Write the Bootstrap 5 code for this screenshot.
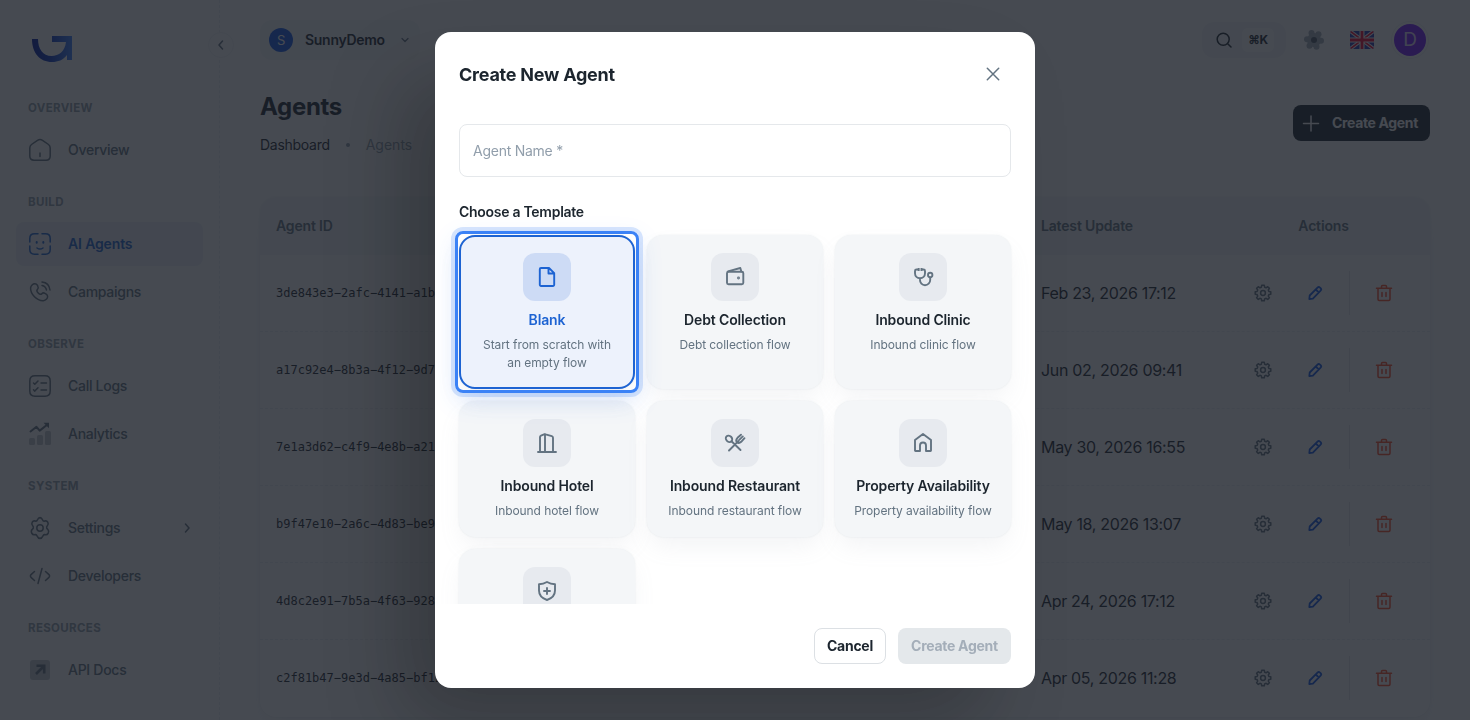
<!DOCTYPE html>
<html lang="en">
<head>
  <meta charset="UTF-8">
  <title>Agents</title>
  <meta name="viewport" content="width=device-width, initial-scale=1">
  <link href="https://cdn.jsdelivr.net/npm/bootstrap@5.3.0/dist/css/bootstrap.min.css" rel="stylesheet">
  <script src="https://cdn.jsdelivr.net/npm/bootstrap@5.3.0/dist/js/bootstrap.bundle.min.js"></script>
  <style>
    body {
      font-family: Inter, "Liberation Sans", sans-serif;
      font-size: 14px;
      line-height: 22px;
      letter-spacing: -0.02em;
      color: #1c252e;
      background: #fff;
      height: 100vh;
      overflow: hidden;
    }
    svg { display: block; flex: none; }
    .ico { fill: none; stroke: currentColor; stroke-width: 1.5; stroke-linecap: round; stroke-linejoin: round; }

    /* sidebar */
    .side { width: 220px; border-right: 1px dashed #eceff2; padding: 0 16px; }
    .side-logo { height: 78px; padding: 36px 0 0 16px; }
    .side-head { height: 50px; padding: 20px 12px 0; font-size: 11.5px; line-height: 20px; font-weight: 700; color: #919eab; letter-spacing: .03em; }
    .side-link { height: 44px; width: 187px; padding: 0 12px; gap: 16px; border-radius: 8px; color: #637381; font-weight: 500; letter-spacing: -0.02em; }
    .side-link + .side-link { margin-top: 4px; }
    .side-link.on { background: #edf1f8; color: #1d63d2; font-weight: 600; letter-spacing: -0.01em; }
    .side-toggle { position: absolute; left: 208px; top: 32px; width: 26px; height: 26px; border: 1px solid #f1f3f5; background: #fff; color: #637381; }

    /* top bar */
    .topbar { height: 80px; }
    .org { height: 40px; width: 160px; border-radius: 12px; background: #f6f7f9; padding: 0 11px 0 9px; font-size: 14px; font-weight: 600; letter-spacing: -0.02em; }
    .org .ico { stroke-width: 1.2; color: #637381; }
    .org-dot { width: 24px; height: 24px; background: #1158e8; color: #fff; font-size: 13px; font-weight: 400; margin-right: 12px; }
    .find { width: 84px; height: 36px; border-radius: 12px; background: #f4f6f8; padding: 0 12px 0 14px; }
    .find-key { width: 32px; height: 24px; border-radius: 6px; background: #fff; font-size: 12px; font-weight: 700; color: #1c252e; }
    .top-gear { margin: 0 26px 0 18px; }
    .top-flag { border-radius: 2px; }
    .who { width: 32px; height: 32px; margin: 0 4px 0 20px; background: #7318ff; color: #e6dcff; font-size: 19px; box-shadow: 0 0 0 2px #fff, 0 0 0 3px #f0f2f4; }

    .page { padding: 0 40px; }
    .page-head { padding-top: 9px; }
    .page-title { font-size: 24px; line-height: 36px; font-weight: 700; letter-spacing: -0.013em; }
    .crumbs { margin-top: 9px; }
    .crumb-dot { width: 4px; height: 4px; background: #919eab; margin: 0 16px; }
    .crumb-now { color: #919eab; letter-spacing: 0; }
    .btn-create { height: 36px; width: 137px; background: #1c252e; color: #fff; border-radius: 8px; font-size: 14px; font-weight: 700; padding: 0 11px 1px 7px; letter-spacing: -0.025em; }

    /* agents table */
    .sheet { margin-top: 41px; border-radius: 16px; box-shadow: 0 0 2px 0 rgba(145,158,171,.2), 0 12px 24px -4px rgba(145,158,171,.12); overflow: hidden; }
    .sheet-head { height: 58px; background: #f4f6f8; color: #637381; font-weight: 600; letter-spacing: -0.012em; }
    .sheet-row { height: 77px; border-bottom: 1px dashed #eceff2; font-size: 16px; letter-spacing: -0.02em; }
    .sheet-row:last-child { border-bottom-color: transparent; }
    .c-id { width: 765px; padding-left: 16px; }
    .c-date { width: 216px; padding-left: 16px; }
    .sheet-row .c-id { font: 12px/18px "DejaVu Sans Mono", monospace; letter-spacing: 0; }
    .c-act { width: 189px; padding-right: 24px; }
    .acts { padding: 0 0 0 12px; }
    .acts .ico { margin-right: 32px; }
    .acts .act-cog { color: #637381; }
    .acts .act-pen { color: #1158e8; margin-right: 24px; stroke-width: 1.8; }
    .acts .act-bin { color: #ff4a24; margin: 0 0 0 24px; }
    .act-line { width: 1px; height: 44px; background: #e3e7eb; }

    /* dialog */
    .modal { background: rgba(24,29,37,.8); --bs-modal-width: 600px; }
    .modal-dialog { margin: 32px auto; }
    .modal-content { height: 656px; border: 0; border-radius: 16px; box-shadow: -40px 40px 80px -8px rgba(0,0,0,.24); color: #1c252e; }
    .dlg-head { height: 84px; padding: 0 32px 0 24px; }
    .dlg-title { font-size: 18px; line-height: 28px; font-weight: 700; letter-spacing: -0.013em; padding-top: 1px; }
    .dlg-close { color: #637381; }
    .dlg-body { height: 488px; padding: 8px 24px 0; overflow: hidden; }
    .name-field { height: 53px; border: 1px solid #e5e8eb; border-radius: 8px; font-size: 14px; padding: 0 13px; color: #1c252e; letter-spacing: -0.018em; }
    .name-field::placeholder { color: #919eab; opacity: 1; }
    .pick-label { margin: 24px 0 12px; font-weight: 600; letter-spacing: -0.02em; }
    .tpl-grid { display: grid; grid-template-columns: repeat(3, 1fr); gap: 12px; }
    .tpl { position: relative; padding: 18px 17px; border-radius: 16px; background: #f4f6f8; text-align: center; box-shadow: 0 0 2px 0 rgba(145,158,171,.2), 0 12px 24px -4px rgba(145,158,171,.12); }
    .tpl-icon { width: 48px; height: 48px; border-radius: 12px; background: #e7eaef; color: #637381; margin: 0 auto 8px; }
    .tpl-icon .ico { stroke-width: 1.9; }
    .tpl-name { font-weight: 600; white-space: nowrap; letter-spacing: -0.01em; margin: 0 -10px; }
    .tpl-note { padding-top: 5px; margin-bottom: -1px; font-size: 12px; line-height: 18px; color: #637381; letter-spacing: -0.006em; }
    .tpl.on { padding: 16px 16px; border: 2px solid #1d63d2; background: #edf2fc; z-index: 1; }
    .tpl.on .tpl-icon { background: #cddbf5; color: #1d63d2; }
    .tpl.on .tpl-name { color: #1d63d2; }
    .tpl.on::after { content: ""; position: absolute; inset: -6px; border: 3px solid #3b82f6; border-radius: 8px; box-shadow: 0 0 0 4px rgba(59,130,246,.2), 0 8px 24px rgba(59,130,246,.15); }
    .dlg-foot { height: 84px; padding: 0 24px; gap: 12px; }
    .dlg-btn { height: 36px; border-radius: 8px; font-size: 14px; font-weight: 700; padding: 0 0 1px; letter-spacing: -0.02em; }
    .dlg-cancel { width: 72px; border: 1px solid #dce0e4; color: #1c252e; }
    .dlg-create, .dlg-create:disabled { width: 113px; border: 0; background: #e4e8eb; color: #a4aeb9; opacity: 1; }
  </style>
</head>
<body>

<svg width="0" height="0" class="position-absolute">
  <symbol id="i-home" viewBox="0 0 24 24"><path d="M1.8 10c0-1.700.5-2.600 1.700-3.500l6-4.200c1.600-1 3.400-1 5 0l6 4.200c1.200.9 1.700 1.800 1.700 3.500v8c0 2.800-1.400 4.200-4.200 4.200H6c-2.800 0-4.200-1.400-4.200-4.200zM12 15v3.500"/></symbol>
  <symbol id="i-face" viewBox="0 0 24 24"><path d="M10 1.800H6.500c-3 0-4.700 1.700-4.700 4.700V10M14 1.800h3.500c3 0 4.700 1.700 4.700 4.700V10M10 22.200H6.500c-3 0-4.700-1.700-4.700-4.700V14M14 22.200h3.500c3 0 4.700-1.700 4.700-4.700V14M9 16c1.800 1.300 4.200 1.300 6 0"/><path stroke-width="2" d="M8.700 10v.8M15.300 10v.8"/></symbol>
  <symbol id="i-call" viewBox="0 0 24 24"><path d="M14 2c4.400.5 7.500 3.500 8 8M14 5.500c2.600.5 4 2 4.500 4.500M9.300 5.100l.6 1.200c.6 1 .4 2.400-.6 3.300 0 0-1.200 1.200.9 3.400s3.400.900 3.400.900c.9-1 2.300-1.200 3.300-.6l1.300.8c1.700 1 1.900 3.400.4 4.900-.9.900-2 1.600-3.200 1.700-2 .1-5.500-.4-8.900-3.900-3.500-3.500-4-6.900-3.900-8.900.1-1.200.8-2.300 1.700-3.200 1.500-1.500 4-1.300 5 .4z"/></symbol>
  <symbol id="i-logs" viewBox="0 0 24 24"><path d="M7 1.800h10c3.500 0 5.200 1.700 5.200 5.200v10c0 3.500-1.700 5.200-5.200 5.200H7c-3.500 0-5.200-1.700-5.200-5.200V7c0-3.500 1.700-5.200 5.200-5.200zM5.500 9l1.300 1.300L10 7M5.500 15.800l1.300 1.300L10 13.800M13 9h5.500M13 16h5.500"/></symbol>
  <symbol id="i-stats" viewBox="0 0 24 24"><g fill="currentColor" stroke="none"><rect x="1" y="16" width="6" height="7" rx="1.500" opacity=".4"/><rect x="9" y="13" width="6" height="10" rx="1.500" opacity=".4"/><rect x="17" y="9" width="6" height="14" rx="1.500" opacity=".4"/><path d="M15.500.8H21V6.300z"/></g><path stroke-width="2" d="M2.500 9.500 8.500 4.800l3.200 3.800L19.500 2.500"/></symbol>
  <symbol id="i-gear" viewBox="0 0 24 24"><path d="M12 1.500c1.700 0 2 .7 2.500 1.900.4 1 1.300 1.400 2.300 1.100 1.300-.4 2.200-.2 3 1.100s.6 2.100-.4 3c-.8.700-1 1.600-.6 2.400l1 1c1 .9 1.300 1.700.4 3.300-.9 1.500-1.700 1.600-3 1.300-1-.3-1.900.2-2.300 1.200-.6 1.300-.9 2.100-2.900 2.100s-2.300-.8-2.900-2.100c-.4-1-1.300-1.500-2.300-1.200-1.300.3-2.100.2-3-1.300s-.6-2.400.4-3.300l1-1c.4-.8.200-1.700-.6-2.400-1-.9-1.200-1.700-.4-3s1.700-1.500 3-1.100c1 .3 1.900-.1 2.300-1.100.5-1.200.8-1.900 2.500-1.900z" transform="translate(0 -.1) scale(1 1.130)"/><circle cx="12" cy="12" r="3.200"/></symbol>
  <symbol id="i-code" viewBox="0 0 24 24"><path d="M6.500 7.500 3.300 10.400c-1.200 1.100-1.200 2.100 0 3.200l3.200 2.900M17.500 7.500l3.200 2.900c1.200 1.100 1.200 2.100 0 3.200l-3.200 2.900M14 4.500l-4 15"/></symbol>
  <symbol id="i-out" viewBox="0 0 24 24"><rect x="2" y="2" width="20" height="20" rx="3" fill="currentColor" stroke="none" opacity=".4"/><path stroke-width="2.600" stroke-linecap="butt" stroke-linejoin="miter" d="M8.500 7.800h7.700v7.700M16 8l-8 8"/></symbol>
  <symbol id="i-cog" viewBox="0 0 20 20"><path d="M8.700 2.300h2.600l.3 1.900 1.500.6 1.600-1.100 1.700 1.700-1.100 1.600.6 1.500 1.900.3v2.500l-1.900.3-.6 1.500 1.100 1.600-1.700 1.700-1.600-1.100-1.500.6-.3 1.900H8.700l-.3-1.900-1.500-.6-1.600 1.100-1.700-1.700 1.100-1.600-.6-1.500-1.900-.3V8.800l1.900-.3.600-1.500-1.100-1.600 1.700-1.700 1.600 1.100 1.500-.6z"/><circle cx="10" cy="10" r="2.400"/></symbol>
  <symbol id="i-pen" viewBox="0 0 20 20"><path d="M4.300 16.200l.4-3.700 7.800-7.900c.8-.8 1.700-.8 2.500 0l.6.6c.8.8.8 1.700 0 2.500L7.900 15.600zM10.800 6.500l2.900 2.900"/></symbol>
  <symbol id="i-bin" viewBox="0 0 20 20"><path d="M2.500 5.300h15M4 5.500v10.800c0 .8.400 1.200 1.200 1.200h9.600c.8 0 1.200-.4 1.200-1.200V5.500M7.500 5V3.500c0-.6.300-1 1-1h3c.7 0 1 .4 1 1V5M8 9.500v4M12 9.500v4"/></symbol>
  <symbol id="i-file" viewBox="0 0 24 24"><path d="M14 3H6a1.200 1.200 0 0 0-1.200 1.200v15.600A1.200 1.200 0 0 0 6 21h12a1.200 1.200 0 0 0 1.200-1.200V8.200zM13.500 3v5.500H19"/></symbol>
  <symbol id="i-wallet" viewBox="0 0 24 24"><rect x="4" y="6.700" width="16.300" height="12.500" rx="1.500"/><path d="M5 6.400 17.300 3l1 3.600"/><circle cx="15.500" cy="13" r=".5" fill="currentColor"/></symbol>
  <symbol id="i-steth" viewBox="0 0 24 24"><path stroke-linecap="butt" d="M8 4.500H5.500C4.500 4.500 4 5 4 6v2.300a5 5 0 0 0 10 0V6c0-1-.5-1.500-1.500-1.500H10.500M9 13.300V15a5 5 0 0 0 5 5.200A5.200 5.200 0 0 0 19.200 15v-3"/><path stroke-linecap="butt" d="M7.700 3v3M10.500 3v3"/><circle cx="19.200" cy="10" r="2.200"/></symbol>
  <symbol id="i-hotel" viewBox="0 0 24 24"><path d="M3 21h18M5 21V6c0-.8.300-1.100 1-1.400L9 3.400c.6-.2 1-.2 1.600 0l6.200 1.800c.9.300 1.200.6 1.200 1.500V21M10 3.300V21"/></symbol>
  <symbol id="i-food" viewBox="0 0 24 24"><path d="M8.500 10.300 17.500 19M6 19.500l9.500-9.500M14 11.300c-1.300-1.600-.8-3.200.5-4.500L18 3.700M21.500 7.200l-3.300 3.600c-1.300 1.200-2.800 1.600-4.200.5M19.800 5.400l-3.600 3.500"/><ellipse cx="6" cy="7.800" rx="2.900" ry="3.500" transform="rotate(-45 6 7.800)"/></symbol>
  <symbol id="i-house" viewBox="0 0 24 24"><path d="M4 9 12 3l8 6v10.500a.5.500 0 0 1-.5.500h-4.500v-5.500a3 3 0 0 0-6 0V20H4.500a.5.500 0 0 1-.5-.5z"/></symbol>
  <symbol id="i-shield" viewBox="0 0 24 24"><path d="M12 3c2.500 1.500 5 2.200 8 2.300v6.200c0 4.600-3 7.800-8 9.500-5-1.700-8-4.900-8-9.500V5.300C7 5.200 9.500 4.500 12 3zM12 9v6M9 12h6"/></symbol>
</svg>

<div class="d-flex vh-100">
  <aside class="side flex-shrink-0">
    <div class="side-logo">
      <svg width="40" height="26" viewBox="0 0 40 26">
        <defs><linearGradient id="lg" x1="0" x2="1"><stop offset="0" stop-color="#0018a0"/><stop offset=".45" stop-color="#0a35c0"/><stop offset="1" stop-color="#3a80ff"/></linearGradient></defs>
        <path fill="url(#lg)" d="M0 3h6c0 10 5 17 13.500 17C27 20 33 15 34 6H20V0h20v24h-5v-5c-4 5-9 7-15 7C8 26 0 17 0 3z"/>
      </svg>
    </div>
    <div class="side-head">OVERVIEW</div>
    <div class="side-link d-flex align-items-center"><svg class="ico" width="24" height="24"><use href="#i-home"/></svg>Overview</div>
    <div class="side-head">BUILD</div>
    <div class="side-link d-flex align-items-center on"><svg class="ico" width="24" height="24"><use href="#i-face"/></svg>AI Agents</div>
    <div class="side-link d-flex align-items-center"><svg class="ico" width="24" height="24"><use href="#i-call"/></svg>Campaigns</div>
    <div class="side-head">OBSERVE</div>
    <div class="side-link d-flex align-items-center"><svg class="ico" width="24" height="24"><use href="#i-logs"/></svg>Call Logs</div>
    <div class="side-link d-flex align-items-center"><svg class="ico" width="24" height="24"><use href="#i-stats"/></svg>Analytics</div>
    <div class="side-head">SYSTEM</div>
    <div class="side-link d-flex align-items-center"><svg class="ico" width="24" height="24"><use href="#i-gear"/></svg>Settings
      <svg class="ico ms-auto" width="8" height="10" viewBox="0 0 8 10"><path d="M2.500 1 6 5 2.500 9"/></svg></div>
    <div class="side-link d-flex align-items-center"><svg class="ico" width="24" height="24"><use href="#i-code"/></svg>Developers</div>
    <div class="side-head">RESOURCES</div>
    <div class="side-link d-flex align-items-center"><svg class="ico" width="24" height="24"><use href="#i-out"/></svg>API Docs</div>
  </aside>
  <div class="side-toggle rounded-circle d-flex align-items-center justify-content-center">
    <svg class="ico" width="8" height="10" viewBox="0 0 8 10"><path d="M5.500 1 2 5l3.500 4"/></svg>
  </div>

  <main class="page flex-grow-1">
    <div class="topbar d-flex align-items-center">
      <div class="org d-flex align-items-center">
        <span class="org-dot rounded-circle d-flex align-items-center justify-content-center">S</span>SunnyDemo
        <svg class="ico ms-auto" width="8" height="6" viewBox="0 0 8 6"><path d="M1 1.500 4 4.500 7 1.500"/></svg>
      </div>
      <div class="find d-flex align-items-center justify-content-between ms-auto">
        <svg class="ico" width="16" height="16" viewBox="0 0 16 16"><circle cx="7.200" cy="7.200" r="6"/><path d="M12 12l3 3"/></svg>
        <span class="find-key d-flex align-items-center justify-content-center">⌘K</span>
      </div>
      <svg class="top-gear" width="20" height="20" viewBox="0 0 20 20"><g fill="#a3adb8"><circle cx="7.500" cy="3" r="3"/><circle cx="14.500" cy="4.200" r="3"/><circle cx="17" cy="10.800" r="3"/><circle cx="12.500" cy="16.700" r="3"/><circle cx="5.500" cy="15.800" r="3"/><circle cx="3" cy="9.200" r="3"/><circle cx="10" cy="10" r="7"/></g><circle cx="10" cy="10" r="3" fill="#4a5866"/></svg>
      <svg class="top-flag" width="24" height="18" viewBox="0 0 24 18">
        <path fill="#1f35b0" d="M0 0h24v18H0z"/>
        <path stroke="#fff" stroke-width="3.600" d="M0 0l24 18M24 0 0 18"/><path stroke="#f0002e" stroke-width="1.600" d="M0 0l24 18M24 0 0 18"/>
        <path stroke="#fff" stroke-width="5" d="M12 0v18M0 9h24"/><path stroke="#f0002e" stroke-width="2.800" d="M12 0v18M0 9h24"/>
      </svg>
      <span class="who rounded-circle d-flex align-items-center justify-content-center">D</span>
    </div>

    <div class="page-head d-flex justify-content-between align-items-start">
      <div>
        <div class="page-title">Agents</div>
        <div class="crumbs d-flex align-items-center"><span>Dashboard</span><span class="crumb-dot rounded-circle"></span><span class="crumb-now">Agents</span></div>
      </div>
      <button class="btn btn-create d-flex align-items-center justify-content-between mt-3">
        <svg class="ico" width="20" height="20" viewBox="0 0 20 20"><path d="M10 3v15M2.500 10.500h15"/></svg>Create Agent
      </button>
    </div>

    <div class="sheet">
      <div class="sheet-head d-flex align-items-center">
        <div class="c-id">Agent ID</div>
        <div class="c-date">Latest Update</div>
        <div class="c-act text-center">Actions</div>
      </div>
      <div id="rows"></div>
    </div>
  </main>
</div>

<div class="modal show d-block" tabindex="-1">
  <div class="modal-dialog">
    <div class="modal-content">
      <div class="dlg-head d-flex align-items-center justify-content-between">
        <div class="dlg-title">Create New Agent</div>
        <svg class="ico dlg-close" width="20" height="20" viewBox="0 0 20 20"><path d="M4.300 4.300l11.400 11.400M15.700 4.300 4.300 15.700"/></svg>
      </div>
      <div class="dlg-body">
        <input class="form-control name-field" placeholder="Agent Name *">
        <div class="pick-label">Choose a Template</div>
        <div class="tpl-grid" id="templates"></div>
      </div>
      <div class="dlg-foot d-flex align-items-center justify-content-end">
        <button class="btn dlg-btn dlg-cancel">Cancel</button>
        <button class="btn dlg-btn dlg-create" disabled>Create Agent</button>
      </div>
    </div>
  </div>
</div>

<script>
  const agents = [
    ['3de843e3−2afc−4141−a1b7', 'Feb 23, 2026 17:12'],
    ['a17c92e4−8b3a−4f12−9d75', 'Jun 02, 2026 09:41'],
    ['7e1a3d62−c4f9−4e8b−a213', 'May 30, 2026 16:55'],
    ['b9f47e10−2a6c−4d83−be95', 'May 18, 2026 13:07'],
    ['4d8c2e91−7b5a−4f63−9281', 'Apr 24, 2026 17:12'],
    ['c2f81b47−9e3d−4a85−bf12', 'Apr 05, 2026 11:28']
  ];
  const icon = (name, size, cls) => `<svg class="ico ${cls || ''}" width="${size}" height="${size}"><use href="#i-${name}"/></svg>`;

  document.getElementById('rows').innerHTML = agents.map(a => `
    <div class="sheet-row d-flex align-items-center">
      <div class="c-id">${a[0]}</div>
      <div class="c-date">${a[1]}</div>
      <div class="acts d-flex align-items-center">
        ${icon('cog', 20, 'act-cog')}
        ${icon('pen', 20, 'act-pen')}
        <span class="act-line"></span>
        ${icon('bin', 20, 'act-bin')}
      </div>
    </div>`).join('');

  // the last template sits at the scroll edge, only its icon is reached
  const templates = [
    ['file', 'Blank', 'Start from scratch with an empty flow'],
    ['wallet', 'Debt Collection', 'Debt collection flow'],
    ['steth', 'Inbound Clinic', 'Inbound clinic flow'],
    ['hotel', 'Inbound Hotel', 'Inbound hotel flow'],
    ['food', 'Inbound Restaurant', 'Inbound restaurant flow'],
    ['house', 'Property Availability', 'Property availability flow'],
    ['shield', '', '']
  ];
  document.getElementById('templates').innerHTML = templates.map((t, i) => `
    <div class="tpl ${i === 0 ? 'on' : ''}">
      <div class="tpl-icon d-flex align-items-center justify-content-center">${icon(t[0], 24)}</div>
      <div class="tpl-name">${t[1]}</div>
      <div class="tpl-note">${t[2]}</div>
    </div>`).join('');
</script>

</body>
</html>
